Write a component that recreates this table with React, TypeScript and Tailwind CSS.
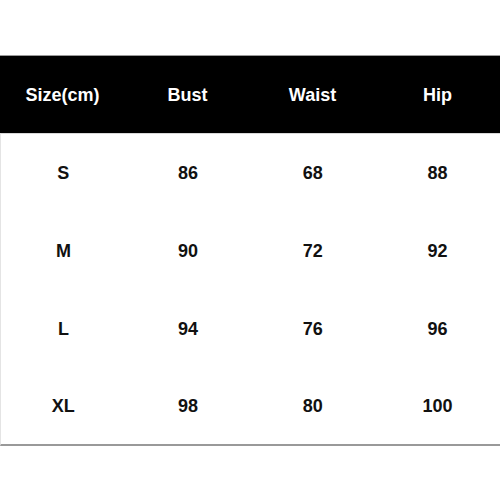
import React from "react";

const headers = ["Size(cm)", "Bust", "Waist", "Hip"];
const rows = [
  ["S", "86", "68", "88"],
  ["M", "90", "72", "92"],
  ["L", "94", "76", "96"],
  ["XL", "98", "80", "100"],
];

export default function App() {
  return (
    <div className="w-[500px] h-[500px] bg-white pt-[55px] font-['Liberation_Sans',Arial,sans-serif]">
      <div className="border-t border-[#9a9a9a] bg-black grid grid-cols-4 h-[78px] items-center">
        {headers.map((h) => (
          <div key={h} className="text-center text-white font-bold text-[18px] leading-none">
            {h}
          </div>
        ))}
      </div>
      <div className="border-t border-[#d8d8d8] border-l border-l-[#e4e4e4] border-b-2 border-b-[#999]">
        {rows.map((r, idx) => (
          <div
            key={r[0]}
            className={
              idx === rows.length - 1
                ? "grid grid-cols-4 h-[76px] items-start pt-[29px]"
                : "grid grid-cols-4 h-[78px] items-center"
            }
          >
            {r.map((c, i) => (
              <div key={i} className="text-center text-[#111] font-bold text-[18px] leading-none">
                {c}
              </div>
            ))}
          </div>
        ))}
      </div>
    </div>
  );
}
